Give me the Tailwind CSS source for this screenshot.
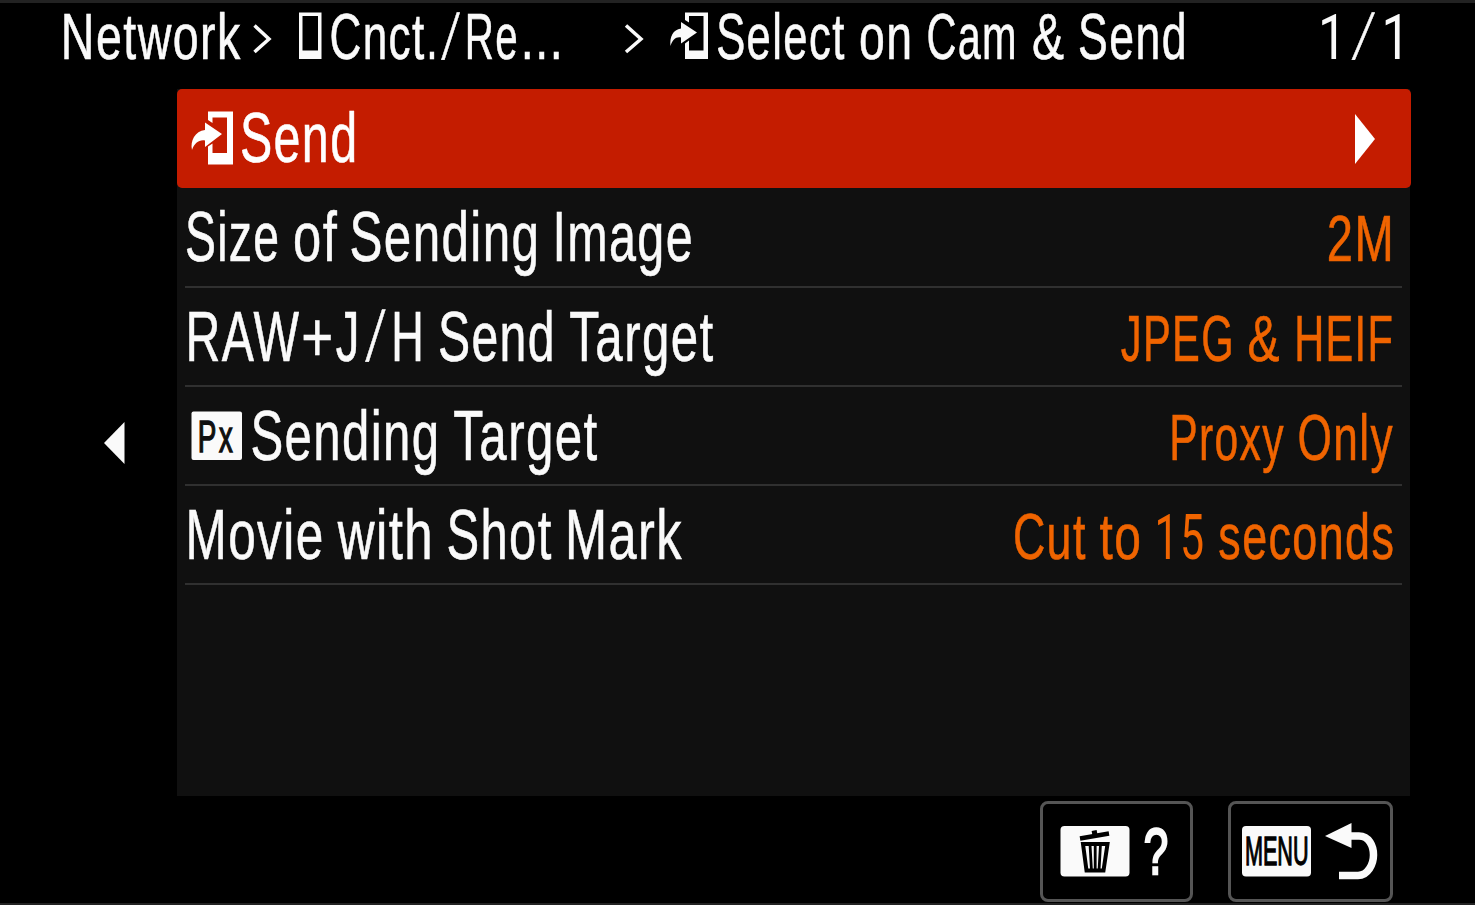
<!DOCTYPE html>
<html lang="en">
<head>
<meta charset="utf-8">
<title>Select on Cam &amp; Send</title>
<script src="https://cdn.jsdelivr.net/npm/@tailwindcss/browser@4"></script>
</head>
<body class="bg-black">
<div class="flex h-[905px] w-[1475px] flex-col overflow-hidden border-t-[3px] border-b-2 border-[#222] bg-black font-['Liberation_Sans',Arial,sans-serif] text-[#fafafa] [&_svg]:overflow-visible [&_text:not([class])]:stroke-current [&_text:not([class])]:stroke-[0.6px]">

  <header class="flex h-[86px] shrink-0 pl-[60px]">
    <svg class="h-[86px] w-[230px] fill-current text-[64px]" viewBox="60 3 230 86">
      <text data-ink="64.5 241" y="59">Network</text>
      <path d="M254.5 25.500L269 39 254.500 52" fill="none" stroke="currentColor" stroke-width="3.500"/>
    </svg>
    <svg class="h-[86px] w-[370px] fill-current text-[64px]" viewBox="290 3 370 86">
      <path fill-rule="evenodd" d="M299 12.500h22.500v46.500h-22.500zM302.500 16v34.500h15.500v-34.500z"/>
      <text data-ink="331.5 424.5" y="59">Cnct</text>
      <text data-ink="429.5 434" y="59">.</text>
      <text data-ink="441.5 460" y="59">/</text>
      <text data-ink="468 516" y="59">Re</text>
      <text data-ink="524.5 558.5" y="59">...</text>
      <path d="M626 25.500L641 39 626 52" fill="none" stroke="currentColor" stroke-width="3.500"/>
    </svg>
    <svg class="h-[86px] w-[640px] fill-current text-[64px]" viewBox="660 3 640 86">
      <path d="M685 12.500h23v46.500h-23v-15.500l4-3v10h14.500v-34.500h-14.500v6.500l-4-2.500z"/>
      <path d="M670.500 46C669.500 37 673 29.500 681 28.500V22L697 32.500 681 43.500V37.500C676 36.500 672.500 39.500 670.500 46z"/>
      <text data-ink="717.5 844.5" y="59">Select</text>
      <text data-ink="860.5 909.5" y="59">on</text>
      <text data-ink="928.5 1014.5" y="59">Cam</text>
      <text data-ink="1033.5 1063.5" y="59">&amp;</text>
      <text data-ink="1079.5 1184" y="59">Send</text>
    </svg>
    <svg class="h-[86px] w-[120px] fill-current text-[64px]" viewBox="1300 3 120 86">
      <text class="font-[Roboto] text-[63px]" data-ink="1322 1336.5" y="59">1</text>
      <text data-ink="1352 1375" y="59">/</text>
      <text class="font-[Roboto] text-[63px]" data-ink="1385.5 1400" y="59">1</text>
    </svg>
  </header>

  <main class="flex h-[707px] shrink-0">
    <div class="flex w-[177px] items-center justify-center pl-[51px]">
      <svg class="h-[42px] w-[21px] fill-current" viewBox="0 0 21 42"><path d="M0 21L20.500 0V42z"/></svg>
    </div>

    <section class="w-[1233px] bg-[#101010]">
      <div class="-mr-px flex h-[99px] items-center justify-between rounded-[5px] bg-[#c41c00] pr-9 text-white">
        <svg class="h-[99px] w-[400px] fill-current text-[71px]" viewBox="177 89 400 99">
          <path d="M208 111.500h25v53h-25v-18l4.500-3v9.500h14.500v-35.500h-14.500v5.500l-4.500-3z"/>
          <path d="M192 150C190 141 195 131 205 130V122.500L222 134 205 147V140.500C199 139.500 194.500 143 192 150z"/>
          <text data-ink="242 354" y="162">Send</text>
        </svg>
        <svg class="h-[50px] w-5 fill-current" viewBox="0 0 20 50"><path d="M0 0L20 25 0 50z"/></svg>
      </div>

      <ul>
        <li class="mr-2 ml-2 flex h-[100px] justify-between border-b-2 border-[#303030]">
          <svg class="h-[98px] w-[600px] fill-current text-[71px]" viewBox="185 188 600 98">
            <text data-ink="187 277.5" y="261">Size</text>
            <text data-ink="294.5 337" y="261">of</text>
            <text data-ink="351.5 536" y="261">Sending</text>
            <text data-ink="556.5 691" y="261">Image</text>
          </svg>
          <svg class="h-[98px] w-[402px] fill-current text-[64px] text-[#f06400]" viewBox="1000 188 402 98">
            <text data-ink="1329 1390.5" y="261">2M</text>
          </svg>
        </li>
        <li class="mr-2 ml-2 flex h-[99px] justify-between border-b-2 border-[#303030]">
          <svg class="h-[97px] w-[600px] fill-current text-[71px]" viewBox="185 288 600 97">
            <text data-ink="189 299" y="360.500">RAW</text>
            <text data-ink="303.5 330.5" y="360.500">+</text>
            <text data-ink="336.5 356.5" y="360.500">J</text>
            <text data-ink="365.5 385.5" y="360.500">/</text>
            <text data-ink="394.5 420.5" y="360.500">H</text>
            <text data-ink="440 551.5" y="360.500">Send</text>
            <text data-ink="570 713.5" y="360.500">Target</text>
          </svg>
          <svg class="h-[97px] w-[402px] fill-current text-[64px] text-[#f06400]" viewBox="1000 288 402 97">
            <text data-ink="1121.5 1230.5" y="360.500">JPEG</text>
            <text data-ink="1249 1279" y="360.500">&amp;</text>
            <text data-ink="1297.5 1391.5" y="360.500">HEIF</text>
          </svg>
        </li>
        <li class="mr-2 ml-2 flex h-[99px] justify-between border-b-2 border-[#303030]">
          <svg class="h-[97px] w-[600px] fill-current text-[71px]" viewBox="185 387 600 97">
            <rect x="191.500" y="411.500" width="50.500" height="48.500" rx="2"/>
            <text class="fill-[#101010] stroke-[#101010] stroke-[1.5px] text-[45px]" data-ink="199.5 215" y="451.500">P</text>
            <text class="fill-[#101010] stroke-[#101010] stroke-[1.5px] text-[45px]" data-ink="219 233" y="451.500">x</text>
            <text data-ink="252.5 436" y="460">Sending</text>
            <text data-ink="454 597.5" y="460">Target</text>
          </svg>
          <svg class="h-[97px] w-[402px] fill-current text-[64px] text-[#f06400]" viewBox="1000 387 402 97">
            <text data-ink="1172.5 1283.5" y="460">Proxy</text>
            <text data-ink="1299.5 1392.5" y="460">Only</text>
          </svg>
        </li>
        <li class="mr-2 ml-2 flex h-[99px] justify-between border-b-2 border-[#303030]">
          <svg class="h-[97px] w-[600px] fill-current text-[71px]" viewBox="185 486 600 97">
            <text data-ink="189 321.5" y="559">Movie</text>
            <text data-ink="337 429.5" y="559">with</text>
            <text data-ink="448.5 551.5" y="559">Shot</text>
            <text data-ink="568.5 682" y="559">Mark</text>
          </svg>
          <svg class="h-[97px] w-[402px] fill-current text-[64px] text-[#f06400]" viewBox="1000 486 402 97">
            <text data-ink="1015 1085.5" y="559">Cut</text>
            <text data-ink="1099.5 1139" y="559">to</text>
            <text class="font-[Roboto] text-[63px]" data-ink="1158 1202.5" y="559">15</text>
            <text data-ink="1219 1392.5" y="559">seconds</text>
          </svg>
        </li>
      </ul>
    </section>
  </main>

  <footer class="flex h-[107px] shrink-0 justify-end gap-[35px] pt-[5px] pr-[82px]">
    <button class="h-[101px] w-[153px] rounded-[8px] border-[3px] border-[#555]">
      <svg class="h-[95px] w-[147px] fill-current" viewBox="1043 804 147 95">
        <rect x="1060.500" y="826" width="69" height="50.500" rx="4"/>
        <g class="fill-none stroke-black">
          <path stroke-width="4.500" d="M1080 838.500L1109 833.500"/>
          <path stroke-width="4" d="M1092 833L1097 832"/>
          <path stroke-width="4" d="M1083 844H1107.500L1103.500 870.500H1086.500z"/>
          <path stroke-width="2.800" d="M1090 844L1091.500 871M1095.200 844V871M1100.500 844L1099 871"/>
        </g>
        <text class="stroke-current stroke-[2.5px] text-[64px]" data-ink="1145 1167" y="874">?</text>
      </svg>
    </button>
    <button class="h-[101px] w-[165px] rounded-[8px] border-[3px] border-[#555]">
      <svg class="h-[95px] w-[159px] fill-current" viewBox="1231 804 159 95">
        <rect x="1242" y="826" width="69" height="50.500" rx="4"/>
        <text class="fill-black stroke-black stroke-[1.3px] text-[40px]" data-ink="1246.5 1307" y="865">MENU</text>
        <path d="M1325 836L1351.500 823V848z"/>
        <path d="M1350 836H1359C1369 836 1373.500 846 1373.500 855S1368 875.500 1358 875.500H1339" fill="none" stroke="currentColor" stroke-width="7.500"/>
      </svg>
    </button>
  </footer>
</div>

<script>
  // Condense each word so that its visible width spans the interval in data-ink.
  function condense() {
    const ctx = document.createElement('canvas').getContext('2d');
    for (const el of document.querySelectorAll('text[data-ink]')) {
      const [left, right] = el.dataset.ink.split(' ').map(Number);
      const y = Number(el.getAttribute('y'));
      const css = getComputedStyle(el);
      const size = parseFloat(css.fontSize);
      const text = el.textContent;
      const gap = text.length > 1 && size > 50 ? 2 : 0;
      ctx.font = css.fontWeight + ' ' + css.fontSize + ' ' + css.fontFamily;
      el.style.letterSpacing = gap + 'px';
      // ink runs from the first glyph's left edge to the last one's right edge
      const m = ctx.measureText(text);
      const inkLeft = -m.actualBoundingBoxLeft;
      const inkWidth = m.actualBoundingBoxRight + gap * (text.length - 1) - inkLeft;
      let sx = (right - left) / inkWidth;
      let slant = 0;
      if (text === '/') {
        // a slash keeps a thin stroke and gets its width by leaning further
        sx = 0.6;
        slant = (right - left - inkWidth * sx) / m.actualBoundingBoxAscent;
      }
      el.setAttribute('y', 0);
      el.setAttribute('transform', `matrix(${sx} 0 ${-slant} 1 ${left - inkLeft * sx} ${y})`);
    }
  }
  window.addEventListener('load', condense);
</script>
</body>
</html>
